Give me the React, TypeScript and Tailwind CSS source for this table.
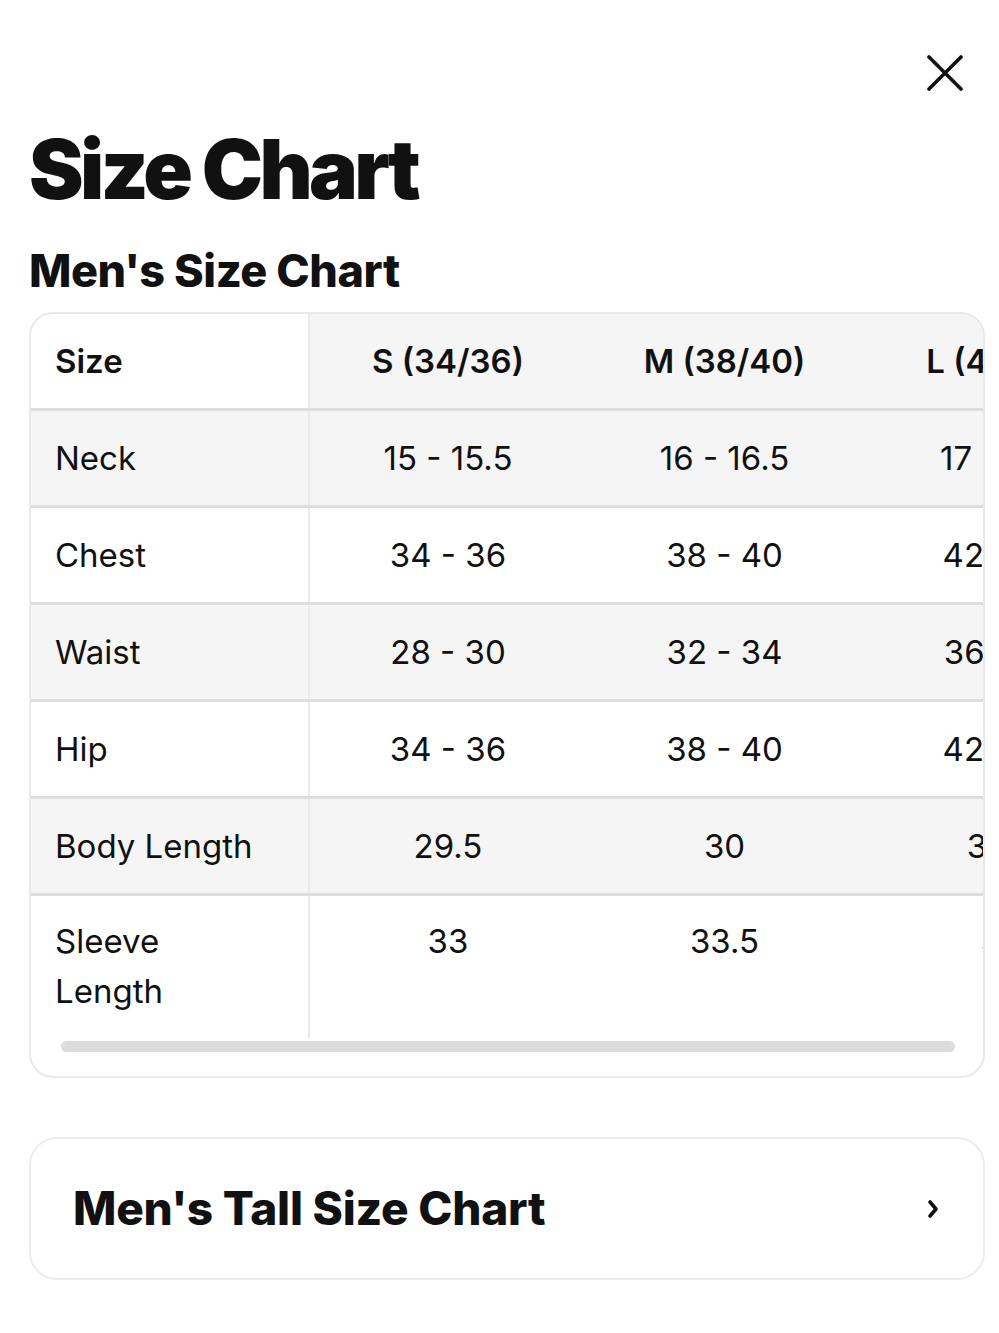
const COLS = ['S (34/36)', 'M (38/40)', 'L (42/44)', 'XL (46/48)'];

const ROWS: { label: string; values: string[] }[] = [
  { label: 'Neck', values: ['15 - 15.5', '16 - 16.5', '17 - 17.5', '18 - 18.5'] },
  { label: 'Chest', values: ['34 - 36', '38 - 40', '42 - 44', '46 - 48'] },
  { label: 'Waist', values: ['28 - 30', '32 - 34', '36 - 38', '40 - 42'] },
  { label: 'Hip', values: ['34 - 36', '38 - 40', '42 - 44', '46 - 48'] },
  { label: 'Body Length', values: ['29.5', '30', '30.5', '31'] },
  { label: 'Sleeve Length', values: ['33', '33.5', '34', '34.5'] },
];

const font = { fontFamily: 'Inter, "Open Sans", sans-serif' };

export default function App() {
  return (
    <div className="min-h-[1333px] w-[999px] bg-white text-[#111]" style={font}>
      <div className="flex justify-end pr-[36px] pt-[55px]">
        <svg width="36" height="36" viewBox="0 0 36 36" fill="none">
          <path d="M2 2 L34 34 M34 2 L2 34" stroke="#111" strokeWidth="3.6" strokeLinecap="round" />
        </svg>
      </div>

      <div className="pl-[29px] pr-[14px]">
        <h1 className="mt-[38px] text-[82px] font-black leading-none tracking-[-0.045em]">Size Chart</h1>
        <h2 className="mt-[37px] text-[45px] font-extrabold leading-none tracking-[-0.01em]">
          Men's Size Chart
        </h2>

        {/* table card */}
        <div className="mt-[19px] overflow-hidden rounded-[24px] border-2 border-[#e9e9e9]">
          <table className="w-[1150px] table-fixed border-collapse text-[33px] leading-[50px]">
            <colgroup>
              <col className="w-[278px]" />
              {COLS.map((c) => (
                <col key={c} className="w-[277px]" />
              ))}
            </colgroup>
            <thead>
              <tr className="border-b-[3px] border-[#dedede]">
                <th className="h-[95px] border-r-2 border-[#ececec] bg-white pl-[24px] text-left font-semibold">
                  Size
                </th>
                {COLS.map((c) => (
                  <th key={c} className="bg-[#f5f5f5] text-center font-semibold">
                    {c}
                  </th>
                ))}
              </tr>
            </thead>
            <tbody>
              {ROWS.map((r, i) => {
                const last = i === ROWS.length - 1;
                const bg = i % 2 === 0 ? 'bg-[#f5f5f5]' : 'bg-white';
                return (
                  <tr key={r.label} className={`${bg} ${last ? '' : 'border-b-[3px] border-[#dedede]'}`}>
                    <td
                      className={`border-r-2 border-[#ececec] pl-[24px] ${
                        last ? 'h-[145px] pt-[20px] align-top' : 'h-[97px] align-middle'
                      }`}
                    >
                      {last ? <span className="block w-[160px]">{r.label}</span> : r.label}
                    </td>
                    {r.values.map((v, j) => (
                      <td
                        key={j}
                        className={`text-center ${last ? 'pt-[20px] align-top' : 'align-middle'}`}
                      >
                        {v}
                      </td>
                    ))}
                  </tr>
                );
              })}
            </tbody>
          </table>
          <div className="pb-[24px] pl-[30px] pr-[28px] pt-[2px]">
            <div className="h-[11px] rounded-full bg-[#dcdcdc]" />
          </div>
        </div>

        {/* tall size chart link */}
        <button
          type="button"
          className="mt-[59px] flex h-[143px] w-full items-center justify-between rounded-[28px] border-2 border-[#ececec] pl-[42px] pr-[44px]"
        >
          <span className="text-[46px] font-extrabold tracking-[-0.005em]">Men's Tall Size Chart</span>
          <svg width="12" height="20" viewBox="0 0 12 20" fill="none">
            <path d="M3 3 L9 10 L3 17" stroke="#111" strokeWidth="3.6" strokeLinecap="round" strokeLinejoin="round" />
          </svg>
        </button>
      </div>
    </div>
  );
}
